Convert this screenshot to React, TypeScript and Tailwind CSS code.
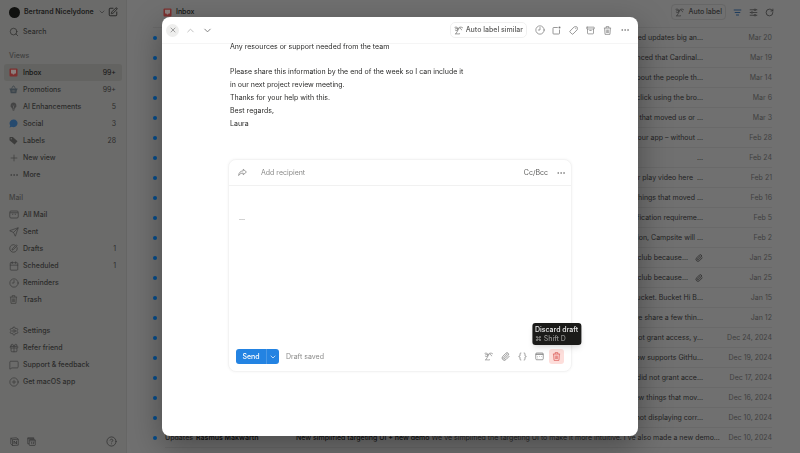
import { clsx } from 'clsx';
import {
  Archive,
  Calendar,
  ChevronDown,
  ChevronUp,
  CircleHelp,
  CirclePlus,
  Clock9,
  Ellipsis,
  Gift,
  MessageSquare,
  Paperclip,
  Plus,
  RotateCw,
  Search,
  Send,
  Settings,
  SquarePen,
  X,
} from 'lucide-react';
import type { ReactNode } from 'react';

function InboxIcon() {
  return (
    <svg viewBox="0 0 18 18" className="size-[9px]">
      <rect x="1" y="1" width="16" height="16" rx="2" fill="#7d2f2e" />
      <path d="M4 3.500h10V11h-2.600L10.200 13H7.800L6.600 11H4z" fill="#8c7f7d" />
    </svg>
  );
}

function BasketIcon() {
  return (
    <svg viewBox="0 0 18 18" className="size-[9px]">
      <path d="M1 7h16v2h-1l-1.400 7.500H3.400L2 9H1z" fill="#3d464d" />
      <path d="M5 7.500 8 2h2l3 5.500" fill="none" stroke="#3d464d" strokeWidth="1.6" />
      <path d="M6.500 10v4M9 10v4M11.500 10v4" stroke="#666" strokeWidth="1" />
    </svg>
  );
}

function BulbIcon() {
  return (
    <svg viewBox="0 0 18 18" className="size-[9px]">
      <path d="M9 1a6 6 0 0 0-3.200 11v1.400h6.400V12A6 6 0 0 0 9 1z" fill="#444" />
      <path d="M6.600 15h4.800M7.400 17h3.200" stroke="#444" strokeWidth="1.3" />
      <path d="M9 12V8M7.200 6.600 9 8l1.800-1.400" fill="none" stroke="#6b6b6a" strokeWidth="1.3" />
    </svg>
  );
}

function BubbleIcon() {
  return (
    <svg viewBox="0 0 18 18" className="size-[9px]">
      <path d="M9.300 1a7.700 7.700 0 1 1-3.600 14.500L1 16.800l1.400-3.900A7.700 7.700 0 0 1 9.300 1z" fill="#264a6e" />
    </svg>
  );
}

function LabelsIcon() {
  return (
    <svg viewBox="0 0 18 18" className="size-[9px]">
      <path
        d="M1 3.400C1 2.600 1.600 2 2.400 2h5.200L17 10.400 11.200 17 1 8.300zM4.600 4.200a1.300 1.300 0 1 0 0 2.600 1.300 1.300 0 0 0 0-2.600z"
        fill="#3c3c3b"
        fillRule="evenodd"
      />
    </svg>
  );
}

function AllMailIcon() {
  return (
    <svg viewBox="0 0 20 18" className="h-[9px] w-[10px]" fill="none" stroke="currentColor" strokeWidth="1.5">
      <rect x="1.5" y="2" width="17" height="14" rx="2.5" />
      <path d="M2 5.500h16M6 8.500h2.500M11.500 8.500H14" />
    </svg>
  );
}

function DraftsIcon() {
  return (
    <svg viewBox="0 0 18 18" className="size-[9px]" fill="none" stroke="currentColor" strokeWidth="1.5">
      <path d="M11.800 2A7.500 7.500 0 1 0 16 6.400" />
      <path d="M6 12.200l.8-2.800L14.600 1.800l1.800 1.800-7.800 7.600z" />
    </svg>
  );
}

function DateIcon() {
  return (
    <svg viewBox="0 0 18 18" className="size-[9px]" fill="none" stroke="currentColor" strokeWidth="1.4">
      <rect x="1.5" y="2" width="15" height="13.5" rx="2" />
      <path d="M1.500 4.500h15" strokeWidth="2.4" />
      <path d="M5 9h1M8.500 9h1M12 9h1M5 12h1" />
    </svg>
  );
}

function BinIcon() {
  return (
    <svg viewBox="0 0 18 18" className="size-[9px]" fill="none" stroke="currentColor" strokeWidth="1.4">
      <path d="M1.800 4.200h14.400M6.300 4V1.300h5.400V4M3.200 4.400l.9 12.300h9.800l.9-12.300" />
      <path d="M6.600 7l.3 7M9 7v7M11.400 7l-.3 7" strokeWidth="1.2" />
    </svg>
  );
}

function WandIcon() {
  return (
    <svg
      viewBox="0 0 18 18"
      className="size-[9px]"
      fill="none"
      stroke="currentColor"
      strokeWidth="1.3"
      strokeLinecap="round"
      strokeLinejoin="round"
    >
      <path d="M2 2.500C4.500 1.500 7.500 2.500 8 5.500c.4 2.800-1.500 3.600-4.500 3.600" />
      <path d="M2.500 6c1.200-1 2.800-1.200 4-.6" />
      <path d="M8 5.500C9.800 1.900 13.500 1 17 3.300" />
      <path d="M12 5c1.800 0 2.900.9 3.200 2.600" />
      <path d="M8 6.500C8.200 10 5.400 12.500 2.800 16.200c2.500-1.300 5 .5 8.500-.6" />
    </svg>
  );
}

function ForwardIcon() {
  return (
    <svg viewBox="0 0 18 18" className="size-[9px]" fill="none" stroke="currentColor" strokeWidth="1.4" strokeLinejoin="round">
      <path d="M10.500 2.500 16.800 8l-6.300 5.500v-3.200C6.500 10.100 3.500 11.500 1.300 15 1.500 9.500 5 6 10.500 5.700z" />
    </svg>
  );
}

function SnoozeIcon() {
  return (
    <svg viewBox="0 0 18 18" className="size-[9px]" fill="none" stroke="currentColor" strokeWidth="1.5">
      <path d="M11.500 3H3.400C2.400 3 2 3.500 2 4.400v10.200c0 1 .5 1.400 1.400 1.400h10.200c1 0 1.400-.5 1.400-1.400V7" />
      <circle cx="15" cy="3.2" r="2" fill="currentColor" stroke="none" />
    </svg>
  );
}

function TagIcon() {
  return (
    <svg viewBox="0 0 18 18" className="size-[9px]" fill="none" stroke="currentColor" strokeWidth="1.5" strokeLinejoin="round">
      <path d="M10.600 1.600h4.600c.8 0 1.300.5 1.300 1.300v4.500l-8.600 8.700c-.6.6-1.300.6-1.900 0l-4-4c-.6-.6-.6-1.300 0-1.900z" />
      <circle cx="13" cy="5" r=".9" fill="currentColor" stroke="none" />
    </svg>
  );
}

function NotionIcon() {
  return (
    <svg viewBox="0 0 18 18" className="size-[9px]" fill="none" stroke="currentColor" strokeWidth="1.3">
      <path d="M1.500 2.500 12.500 1.500l4 2.800v12l-11.600.9-3.400-3.700zM1.500 2.500 5 5.400l11.500-1M5 5.400v11.800" />
      <path d="M8 14V8l5 6V7.600" strokeWidth="1.5" />
    </svg>
  );
}

function NotionCalendarIcon() {
  return (
    <svg viewBox="0 0 18 18" className="size-[9px]" fill="none" stroke="currentColor" strokeWidth="1.3">
      <path d="M4 13.500H1.500v-12h12V4" />
      <path d="M1.500 3.500h12" strokeWidth="1.6" />
      <rect x="4.5" y="5" width="12" height="12" rx="1.5" />
      <path d="M4.500 7.500h12M8 10.500h1.500v4M12 10.500h1.800l-1.200 4" />
    </svg>
  );
}

const icon = 'size-[10px] stroke-[1.7]';

type NavItem = {
  label: string;
  icon: ReactNode;
  count?: string;
  active?: boolean;
};

const views: NavItem[] = [
  { label: 'Inbox', icon: <InboxIcon />, count: '99+', active: true },
  { label: 'Promotions', icon: <BasketIcon />, count: '99+' },
  { label: 'AI Enhancements', icon: <BulbIcon />, count: '5' },
  { label: 'Social', icon: <BubbleIcon />, count: '3' },
  { label: 'Labels', icon: <LabelsIcon />, count: '28' },
  { label: 'New view', icon: <Plus className={icon} /> },
  { label: 'More', icon: <Ellipsis className={icon} /> },
];

const mailboxes: NavItem[] = [
  { label: 'All Mail', icon: <AllMailIcon /> },
  { label: 'Sent', icon: <Send className={icon} /> },
  { label: 'Drafts', icon: <DraftsIcon />, count: '1' },
  { label: 'Scheduled', icon: <Calendar className={icon} />, count: '1' },
  { label: 'Reminders', icon: <Clock9 className={icon} /> },
  { label: 'Trash', icon: <BinIcon /> },
];

const links: NavItem[] = [
  { label: 'Settings', icon: <Settings className={icon} /> },
  { label: 'Refer friend', icon: <Gift className={icon} /> },
  { label: 'Support & feedback', icon: <MessageSquare className={icon} /> },
  { label: 'Get macOS app', icon: <CirclePlus className={icon} /> },
];

type Mail = {
  snippet: string;
  date: string;
  attachment?: boolean;
  label?: string;
  sender?: string;
  subject?: string;
};

const mails: Mail[] = [
  { snippet: 'used updates big an...', date: 'Mar 20' },
  { snippet: 'announced that Cardinal...', date: 'Mar 19' },
  { snippet: 'about the people th...', date: 'Mar 14' },
  { snippet: 'to click using the bro...', date: 'Mar 6' },
  { snippet: 'that moved us or ...', date: 'Mar 3' },
  { snippet: 'your app – without ...', date: 'Feb 28' },
  { snippet: '...', date: 'Feb 24' },
  { snippet: 'or play video here \u00a0...', date: 'Feb 21' },
  { snippet: 'things that moved ...', date: 'Feb 16' },
  { snippet: 'verification requireme...', date: 'Feb 5' },
  { snippet: 'addition, Campsite will ...', date: 'Feb 2' },
  { snippet: 'me.club because...', date: 'Jan 25', attachment: true },
  { snippet: 'me.club because...', date: 'Jan 25', attachment: true },
  { snippet: 'Bucket. Bucket Hi B...', date: 'Jan 15' },
  { snippet: 'we share a few thin...', date: 'Jan 12' },
  { snippet: 'not grant access, y...', date: 'Dec 24, 2024' },
  { snippet: 'now supports GitHu...', date: 'Dec 19, 2024' },
  { snippet: 'did not grant acce...', date: 'Dec 17, 2024' },
  { snippet: 'few things that mov...', date: 'Dec 16, 2024' },
  { snippet: 'not displaying corr...', date: 'Dec 10, 2024' },
  {
    label: 'Updates',
    sender: 'Rasmus Makwarth',
    subject: 'New simplified targeting UI + new demo',
    snippet: "We've simplified the targeting UI to make it more intuitive. I've also made a new demo...",
    date: 'Dec 10, 2024',
  },
];

function NavList({ items }: { items: NavItem[] }) {
  return (
    <ul>
      {items.map((item) => (
        <li key={item.label}>
          <a
            href="#"
            className={clsx(
              'flex h-[17px] items-center rounded-[3px] pr-[6px] pl-[5px] font-medium',
              item.active ? 'bg-[#636361] text-[#151514]' : 'text-[#2c2c2b]',
            )}
          >
            <span className="flex w-[14px] items-center text-[#3c3c3b]">{item.icon}</span>
            <span className="flex-1">{item.label}</span>
            {item.count && <span className="font-normal">{item.count}</span>}
          </a>
        </li>
      ))}
    </ul>
  );
}

function Sidebar() {
  return (
    <nav className="flex w-[127px] shrink-0 flex-col border-r border-[#666665] bg-[#6b6b6a] px-1 pt-1 pb-[6px]">
      <div className="flex h-4 items-center pr-[4px] pl-[5px]">
        <span className="size-[11px] rounded-full bg-[#10110f]" />
        <button className="ml-1 flex flex-1 items-center gap-1 font-semibold whitespace-nowrap text-[#1c1c1b]">
          Bertrand Nicelydone
          <ChevronDown className="size-2 text-[#333]" />
        </button>
        <button aria-label="Compose" className="text-[#1c1c1b]">
          <SquarePen className="size-[10px]" />
        </button>
      </div>
      <a href="#" className="mt-1 flex h-4 items-center pl-[5px] font-medium text-[#2c2c2b]">
        <span className="w-[14px]">
          <Search className={icon} />
        </span>
        Search
      </a>
      <h2 className="mt-[10px] mb-[2px] flex h-3 items-center pl-[5px] font-medium text-[#40403f]">Views</h2>
      <NavList items={views} />
      <h2 className="mt-[9px] mb-[2px] flex h-3 items-center pl-[5px] font-medium text-[#40403f]">Mail</h2>
      <NavList items={mailboxes} />
      <div className="mt-[14px]">
        <NavList items={links} />
      </div>
      <div className="mt-auto flex items-center gap-2 pr-[5px] pl-[6px] text-[#333]">
        <button aria-label="Notion">
          <NotionIcon />
        </button>
        <button aria-label="Notion Calendar">
          <NotionCalendarIcon />
        </button>
        <button aria-label="Help" className="ml-auto">
          <CircleHelp className="size-[11px] stroke-[1.7]" />
        </button>
      </div>
    </nav>
  );
}

function MailRow({ mail }: { mail: Mail }) {
  return (
    <li className="flex h-5 items-center">
      <span className="mr-2 size-1 shrink-0 rounded-full bg-[#044c8c]" />
      <div className="flex h-5 min-w-0 flex-1 items-center border-b border-[#696969] text-[#222]">
        {mail.label && <span className="w-[31px] font-medium">{mail.label}</span>}
        {mail.sender && <span className="w-[100px] font-semibold text-[#111]">{mail.sender}</span>}
        {mail.subject && <span className="mr-[2px] font-medium whitespace-nowrap text-[#111]">{mail.subject}</span>}
        <span
          className={clsx('min-w-0 flex-1 whitespace-nowrap', {
            'text-right': !mail.subject,
          })}
        >
          {mail.snippet}
        </span>
        {mail.attachment && <Paperclip className="ml-[7px] size-2" />}
        <time className="w-[69px] shrink-0 text-right text-[#3f3f3f]">{mail.date}</time>
      </div>
    </li>
  );
}

function MailList() {
  return (
    <main className="min-w-0 flex-1 overflow-hidden pr-7 pl-[26px]">
      <header className="-mr-[2px] flex h-[27px] items-center pb-[3px] pl-[10px] text-[#151514]">
        <InboxIcon />
        <h1 className="ml-1 font-medium">Inbox</h1>
        <button className="mr-[7px] ml-auto flex h-4 items-center gap-1 rounded-[4px] border border-[#666] px-[3px] font-medium text-[#2b2b2b]">
          <WandIcon />
          Auto label
        </button>
        <button aria-label="Group" className="text-[#203d5d]">
          <svg viewBox="0 0 18 18" className="size-[9px]" stroke="currentColor" strokeWidth="2">
            <path d="M1.500 4h15M3.500 9h11M6 14h6" />
          </svg>
        </button>
        <button aria-label="View options" className="ml-[7px] text-[#2b2b2b]">
          <svg viewBox="0 0 18 18" className="size-[9px]" fill="#707070" stroke="currentColor" strokeWidth="1.4">
            <path d="M1.500 3.500h15M1.500 9h15M1.500 14.500h15" />
            <circle cx="12" cy="3.5" r="1.6" />
            <circle cx="6" cy="9" r="1.6" />
            <circle cx="12" cy="14.5" r="1.6" />
          </svg>
        </button>
        <button aria-label="Refresh" className="ml-[7px] text-[#2b2b2b]">
          <RotateCw className="size-[9px]" />
        </button>
      </header>
      <ul className="border-t border-[#696969]">
        {mails.map((mail, i) => (
          <MailRow key={i} mail={mail} />
        ))}
      </ul>
    </main>
  );
}

function IconButton({ label, children }: { label: string; children: ReactNode }) {
  return (
    <button type="button" aria-label={label} className="flex h-[15px] w-[17px] items-center justify-center">
      {children}
    </button>
  );
}

function Composer() {
  return (
    <form className="mt-[29px] rounded-[8px] border border-[#f3f3f3] bg-white shadow-[0_0_3px_rgba(0,0,0,0.05)]">
      <div className="flex h-[26px] items-center border-b border-[#f1f1f1] pr-[2px] pl-[9px] text-[#777]">
        <button type="button" aria-label="Forward">
          <ForwardIcon />
        </button>
        <input
          aria-label="Add recipient"
          placeholder="Add recipient"
          className="ml-[14px] min-w-0 flex-1 outline-none placeholder:text-[#8a8a89]"
        />
        <button type="button" className="mr-1 text-[#5c5c5b]">
          Cc/Bcc
        </button>
        <IconButton label="More options">
          <Ellipsis className={icon} />
        </IconButton>
      </div>
      <div className="h-[163px] px-[10px] pt-[26px] text-[#666]">
        <button type="button" aria-label="Show quoted text" className="block leading-3">
          ...
        </button>
      </div>
      <div className="flex h-[22px] items-start px-[7px] text-[#777]">
        <div className="flex h-[15px] items-stretch overflow-hidden rounded-[3px] bg-[#2383e2] text-white">
          <button className="w-[30px] font-medium">Send</button>
          <button type="button" aria-label="Send options" className="flex w-[13px] items-center justify-center border-l border-[#4a98e6]">
            <ChevronDown className="size-2" />
          </button>
        </div>
        <span className="ml-[7px] leading-[15px] text-[#8a8a89]">Draft saved</span>
        <div className="ml-auto flex">
          <IconButton label="Auto write">
            <WandIcon />
          </IconButton>
          <IconButton label="Attach file">
            <Paperclip className="size-[9px]" />
          </IconButton>
          <IconButton label="Insert snippet">
            <svg viewBox="0 0 18 18" className="size-[9px]" fill="none" stroke="currentColor" strokeWidth="1.5">
              <path d="M6.500 2C4 2 4 3 4 5s0 3.200-2.500 4C4 9.800 4 11 4 13s0 3 2.500 3M11.500 2C14 2 14 3 14 5s0 3.200 2.500 4C14 9.800 14 11 14 13s0 3-2.500 3" />
            </svg>
          </IconButton>
          <IconButton label="Share availability">
            <DateIcon />
          </IconButton>
          <div className="relative ml-[1px]">
            <button
              type="button"
              aria-label="Discard draft"
              className="flex size-[15px] items-center justify-center rounded-[3px] bg-[#fddedb] text-[#d8504d]"
            >
              <BinIcon />
            </button>
            <div
              role="tooltip"
              className="absolute bottom-full left-1/2 mb-1 -translate-x-1/2 rounded-[3px] bg-[#1b1b19] px-[3px] py-[2px] leading-[9px] font-medium whitespace-nowrap text-[#eee] shadow-md"
            >
              Discard draft
              <div className="text-[#8f8f8d]">⌘ Shift D</div>
            </div>
          </div>
        </div>
      </div>
    </form>
  );
}

function MessageDialog() {
  return (
    <div className="fixed inset-0 flex justify-center py-[17px]">
      <div
        role="dialog"
        aria-label="Message"
        className="flex w-[59.5%] flex-col overflow-hidden rounded-[8px] bg-white shadow-[0_10px_32px_rgba(0,0,0,0.35)]"
      >
        <header className="flex h-[27px] shrink-0 items-center border-b border-[#f5f5f5] pr-[5px] pl-1 text-[#777]">
          <button aria-label="Close" className="mr-[3px] flex size-[13px] items-center justify-center rounded-full bg-[#eeeeed]">
            <X className="size-2" />
          </button>
          <IconButton label="Previous message">
            <ChevronUp className="size-[11px] text-[#bbb]" />
          </IconButton>
          <IconButton label="Next message">
            <ChevronDown className="size-[11px]" />
          </IconButton>
          <button className="mr-[4px] ml-auto flex h-4 items-center gap-[3px] rounded-[5px] border border-[#f0f0f0] px-[3px] font-medium text-[#5c5c5b]">
            <WandIcon />
            Auto label similar
          </button>
          <IconButton label="Remind me">
            <Clock9 className={icon} />
          </IconButton>
          <IconButton label="Mark unread">
            <SnoozeIcon />
          </IconButton>
          <IconButton label="Label">
            <TagIcon />
          </IconButton>
          <IconButton label="Archive">
            <Archive className="size-[9px] stroke-[1.8]" />
          </IconButton>
          <IconButton label="Trash">
            <BinIcon />
          </IconButton>
          <IconButton label="More">
            <Ellipsis className={icon} />
          </IconButton>
        </header>
        <div className="mx-auto w-full max-w-[344px] flex-1">
          <div className="px-[2px] leading-[13px] text-[#2b2b2a]">
            <p className="-mt-1">Any resources or support needed from the team</p>
            <p className="mt-3">
              Please share this information by the end of the week so I can include it
              <br />
              in our next project review meeting.
            </p>
            <p>Thanks for your help with this.</p>
            <p>Best regards,</p>
            <p>Laura</p>
          </div>
          <Composer />
        </div>
      </div>
    </div>
  );
}

export default function App() {
  return (
    <div className="flex h-screen overflow-hidden bg-[#707070] font-[Inter,'Noto_Sans',sans-serif] text-[7px] leading-[12px]">
      <Sidebar />
      <MailList />
      <MessageDialog />
    </div>
  );
}
